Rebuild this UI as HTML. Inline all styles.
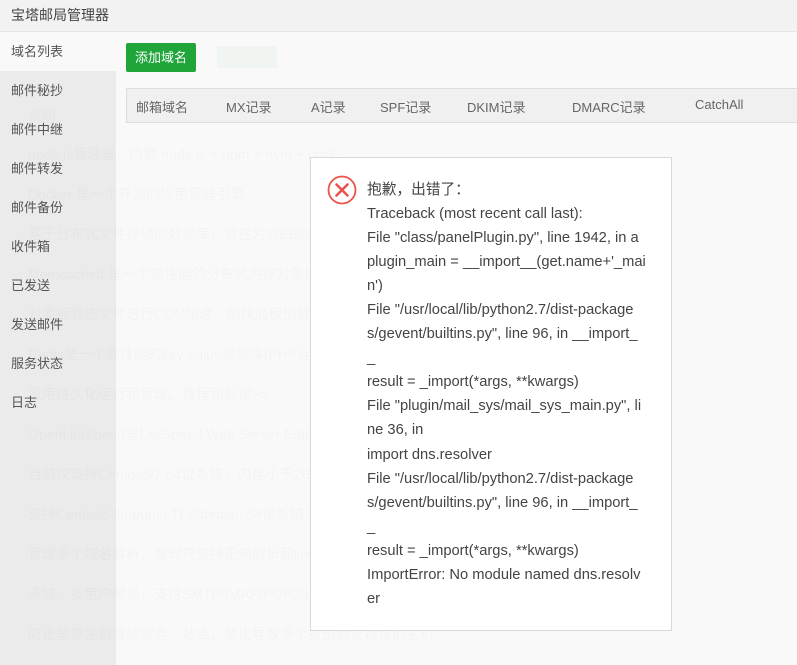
<!DOCTYPE html>
<html><head><meta charset="utf-8"><style>
*{margin:0;padding:0;box-sizing:border-box}
body{width:797px;height:665px;overflow:hidden;background:#f9f9f9;font-family:"Liberation Sans","Noto Sans CJK SC",sans-serif;position:relative;color:#555}
.top{position:absolute;left:0;top:0;width:797px;height:32px;background:#f2f2f2;border-bottom:1px solid #e6e6e6;font-size:14px;color:#444;padding:5px 0 0 11px}
.side{position:absolute;left:0;top:32px;width:116px;height:633px;background:#ebebeb}
.side div{height:39px;line-height:39px;padding-left:11px;font-size:13px;color:#555}
.side div.on{background:#f9f9f9}
.btn{position:absolute;left:126px;top:43px;width:70px;height:29px;background:#20a53a;color:#fff;font-size:13px;line-height:29px;text-align:center;border-radius:2px}
.th{position:absolute;left:126px;top:88px;width:680px;height:35px;background:#f0f0f0;border:1px solid #ddd;font-size:13px;color:#666}
.th span{position:absolute;top:8px}
.faint{position:absolute;left:28px;font-size:14px;color:#000;opacity:.018;white-space:nowrap}
.dlg{position:absolute;left:310px;top:157px;width:362px;height:474px;background:#fff;border:1px solid #d9d9d9}
.txt{position:absolute;left:56px;top:20px;font-size:14.7px;color:#444;white-space:nowrap}
.txt div{height:24.06px;line-height:24px}
</style></head><body>
<div class="top">宝塔邮局管理器</div>
<div class="side">
<div class="on">域名列表</div><div>邮件秘抄</div><div>邮件中继</div><div>邮件转发</div><div>邮件备份</div><div>收件箱</div><div>已发送</div><div>发送邮件</div><div>服务状态</div><div>日志</div>
</div>
<div class="btn">添加域名</div>
<div style="position:absolute;left:217px;top:46px;width:60px;height:22px;background:#20a53a;opacity:.04"></div>
<div class="th"><span style="left:9px">邮箱域名</span><span style="left:99px">MX记录</span><span style="left:184px">A记录</span><span style="left:253px">SPF记录</span><span style="left:340px">DKIM记录</span><span style="left:445px">DMARC记录</span><span style="left:568px">CatchAll</span></div>
<div class="faint" style="top:106px">说明</div>
<div class="faint" style="top:144px">node.js管理器，内置 node.js + npm + nvm + pm2！</div>
<div class="faint" style="top:184px">Docker 是一个开源的应用容器引擎</div>
<div class="faint" style="top:224px">基于分布式文件存储的数据库，旨在为WEB应用提供可扩展的高性能数据存储解决方案</div>
<div class="faint" style="top:264px">Memcached 是一个高性能的分布式内存对象缓存系统</div>
<div class="faint" style="top:304px">对面板静态文件进行CDN加速，加快面板加载速度，提升体验</div>
<div class="faint" style="top:344px">Redis是一个高性能的key-value数据库(PHP连接redis，需PHP安装Redis扩展)</div>
<div class="faint" style="top:384px">应用持久化运行和管理。教程和反馈&gt;&gt;</div>
<div class="faint" style="top:424px">OpenLiteSpeed是LiteSpeed Web Server Enterprise的开源版本</div>
<div class="faint" style="top:464px">当前仅支持Centos6/7 64位系统，内存小于2GB的机器请勿安装</div>
<div class="faint" style="top:504px">支持Centos6-8/ubuntu TLS/debian 64位系统,内存小于1GB的机器请勿安装</div>
<div class="faint" style="top:544px">管理多个域名解析，暂时只支持正向解析和linux centos 7</div>
<div class="faint" style="top:584px">多域、多用户邮局，支持SMTP/IMAP/POP3/HTTP协议</div>
<div class="faint" style="top:624px">防止恶意主机爆破服务、站点，禁止导致多个身份验证错误的主机</div>
<div class="dlg">
<svg style="position:absolute;left:16px;top:17px" width="30" height="30" viewBox="0 0 30 30"><circle cx="15" cy="15" r="13.5" fill="none" stroke="#e8544a" stroke-width="1.8"/><path d="M9.5 9.5L20.5 20.5M20.5 9.5L9.5 20.5" stroke="#e8544a" stroke-width="2.6" stroke-linecap="round"/></svg>
<div class="txt">
<div>抱歉，出错了：</div>
<div>Traceback (most recent call last):</div>
<div>File "class/panelPlugin.py", line 1942, in a</div>
<div>plugin_main = __import__(get.name+'_mai</div>
<div>n')</div>
<div>File "/usr/local/lib/python2.7/dist-package</div>
<div>s/gevent/builtins.py", line 96, in __import_</div>
<div>_</div>
<div>result = _import(*args, **kwargs)</div>
<div>File "plugin/mail_sys/mail_sys_main.py", li</div>
<div>ne 36, in</div>
<div>import dns.resolver</div>
<div>File "/usr/local/lib/python2.7/dist-package</div>
<div>s/gevent/builtins.py", line 96, in __import_</div>
<div>_</div>
<div>result = _import(*args, **kwargs)</div>
<div>ImportError: No module named dns.resolv</div>
<div>er</div>
</div>
</div>
</body></html>
